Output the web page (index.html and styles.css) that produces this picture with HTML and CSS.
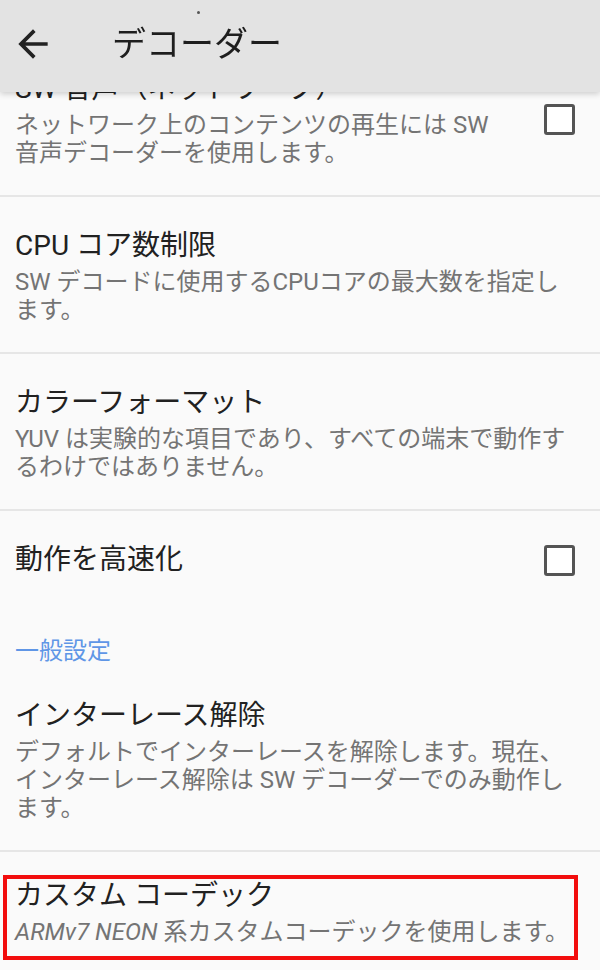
FILE: index.html
```html
<!DOCTYPE html>
<html lang="ja">
<head>
<meta charset="utf-8">
<title>デコーダー</title>
<link rel="stylesheet" href="styles.css">
</head>
<body>
<header class="app-bar">
  <span class="cam-dot"></span>
  <svg class="back" viewBox="0 0 24 24" width="44" height="44" aria-hidden="true">
    <path d="M20 11H7.83l5.59-5.59L12 4l-8 8 8 8 1.41-1.41L7.83 13H20v-2z" fill="#222"/>
  </svg>
  <h1 class="app-title">デコーダー</h1>
</header>

<main class="list">
  <div class="row with-box">
    <div class="text">
      <div class="title">SW 音声（ネットワーク）</div>
      <div class="summary">ネットワーク上のコンテンツの再生には SW 音声デコーダーを使用します。</div>
    </div>
    <span class="checkbox"></span>
  </div>
  <div class="divider"></div>

  <div class="row">
    <div class="text">
      <div class="title">CPU コア数制限</div>
      <div class="summary">SW デコードに使用するCPUコアの最大数を指定します。</div>
    </div>
  </div>
  <div class="divider"></div>

  <div class="row">
    <div class="text">
      <div class="title">カラーフォーマット</div>
      <div class="summary">YUV は実験的な項目であり、すべての端末で動作するわけではありません。</div>
    </div>
  </div>
  <div class="divider"></div>

  <div class="row with-box">
    <div class="text">
      <div class="title">動作を高速化</div>
    </div>
    <span class="checkbox"></span>
  </div>

  <div class="category">一般設定</div>

  <div class="row">
    <div class="text">
      <div class="title">インターレース解除</div>
      <div class="summary">デフォルトでインターレースを解除します。現在、インターレース解除は SW デコーダーでのみ動作します。</div>
    </div>
  </div>
  <div class="divider"></div>

  <div class="row-highlight">
    <div class="highlight">
      <div class="title">カスタム コーデック</div>
      <div class="summary nowrap"><em>ARMv7 NEON</em> 系カスタムコーデックを使用します。</div>
    </div>
  </div>
</main>
</body>
</html>
```

FILE: styles.css
```css
* { box-sizing: border-box; }

html, body {
  margin: 0;
  padding: 0;
  background: #fafafa;
  font-family: Roboto, "Noto Sans CJK JP", sans-serif;
  color: #212121;
}

.app-bar {
  position: fixed;
  top: 0;
  left: 0;
  right: 0;
  height: 92px;
  background: #e3e3e3;
  display: flex;
  align-items: center;
  padding: 0 0 5px 11px;
  box-shadow: 0 2px 6px rgba(0, 0, 0, 0.18);
  z-index: 2;
}

.cam-dot {
  position: absolute;
  left: 197px;
  top: 11px;
  width: 3px;
  height: 3px;
  border-radius: 50%;
  background: #555;
}

.back {
  display: block;
  flex: none;
}

.app-title {
  margin: 0 0 0 57px;
  font-size: 34px;
  font-weight: 400;
  line-height: 40px;
  color: #1e1e1e;
}

.list {
  padding-top: 40px;
}

.row {
  display: flex;
  align-items: center;
  padding: 32px 25px 28px 15px;
}

.text {
  flex: 1;
  min-width: 0;
}

.title {
  font-size: 28px;
  line-height: 34px;
  color: #212121;
}

.summary {
  margin-top: 5px;
  font-size: 24px;
  line-height: 28px;
  color: #747474;
}

.summary em {
  font-style: italic;
}

.nowrap {
  white-space: nowrap;
}

.checkbox {
  flex: none;
  width: 31px;
  height: 31px;
  margin-left: 36px;
  border: 3px solid #545454;
  border-radius: 3px;
  background: #fff;
}

.divider {
  height: 2px;
  background: #e6e6e6;
}

.category {
  padding: 32px 15px 2px;
  font-size: 24px;
  line-height: 28px;
  color: #5f96e6;
}

.row-highlight {
  padding: 23px 22px 0 3px;
}

.highlight {
  border: 4px solid #f20d0d;
  padding: 0 0 10px 8px;
}
```
